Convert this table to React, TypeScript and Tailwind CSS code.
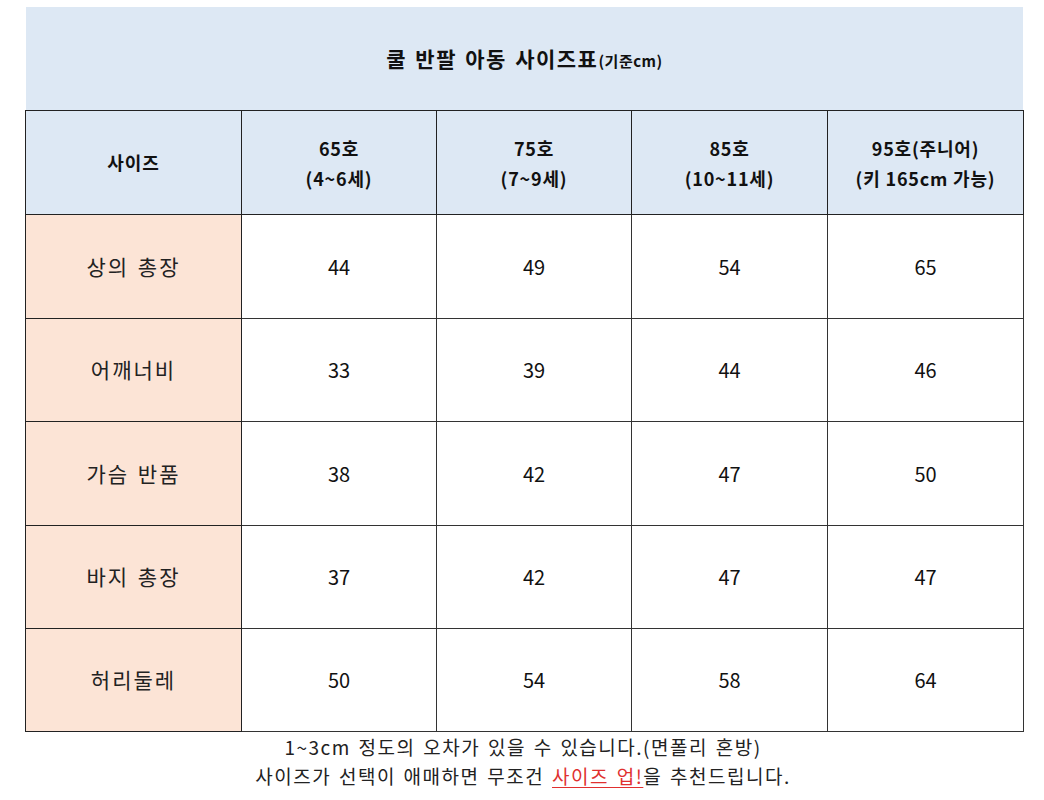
import React from "react";

const headers = [
  ["65호", "(4~6세)"],
  ["75호", "(7~9세)"],
  ["85호", "(10~11세)"],
  ["95호(주니어)", "(키 165cm 가능)"],
];

const rows: { label: string; values: string[]; h: string }[] = [
  { label: "상의 총장", values: ["44", "49", "54", "65"], h: "h-[104px]" },
  { label: "어깨너비", values: ["33", "39", "44", "46"], h: "h-[103px]" },
  { label: "가슴 반품", values: ["38", "42", "47", "50"], h: "h-[104px]" },
  { label: "바지 총장", values: ["37", "42", "47", "47"], h: "h-[103px]" },
  { label: "허리둘레", values: ["50", "54", "58", "64"], h: "h-[103px]" },
];

export default function App() {
  return (
    <div
      className="w-[1044px] h-[800px] bg-white text-[#111] overflow-hidden"
      style={{ fontFamily: '"Noto Sans CJK KR", "Noto Sans", sans-serif' }}
    >
      <div className="pt-[7px] pl-[26px]">
        {/* title band */}
        <div className="w-[997px] h-[103px] bg-[#dde8f4] flex items-center justify-center">
          <span className="text-[21px] font-bold tracking-[1.5px] [word-spacing:2px]">
            쿨 반팔 아동 사이즈표
            <span className="text-[15px] tracking-[0.5px]">(기준cm)</span>
          </span>
        </div>
      </div>

      <div className="ml-[25px] w-[999px] grid grid-cols-[216px_195px_195px_196px_196px] border-l border-t border-[#222]">
        {/* header */}
        <div className="h-[104px] bg-[#dde8f4] border-r border-b border-[#222] flex items-center justify-center text-[18px] font-bold tracking-[1px]">
          사이즈
        </div>
        {headers.map(([a, b], i) => (
          <div
            key={i}
            className="h-[104px] bg-[#dde8f4] border-r border-b border-[#222] flex flex-col items-center justify-center text-[18px] font-bold leading-[30px] tracking-[0.8px]"
          >
            <span>{a}</span>
            <span>{b}</span>
          </div>
        ))}

        {rows.map((r) => (
          <React.Fragment key={r.label}>
            <div
              className={`${r.h} bg-[#fce4d6] border-r border-b border-[#222] flex items-center justify-center text-[21px] text-[#222] tracking-[2px] [word-spacing:2px]`}
            >
              {r.label}
            </div>
            {r.values.map((v, j) => (
              <div
                key={j}
                className={`${r.h} bg-white border-r border-b border-[#333] flex items-center justify-center text-[20px] text-[#111]`}
              >
                {v}
              </div>
            ))}
          </React.Fragment>
        ))}
      </div>

      {/* notes */}
      <div className="flex flex-col items-center text-[19px] leading-[29px] text-[#222] tracking-[1.5px] [word-spacing:2px] pl-[2px]">
        <p>1~3cm 정도의 오차가 있을 수 있습니다.(면폴리 혼방)</p>
        <p>
          사이즈가 선택이 애매하면 무조건{" "}
          <span className="text-[#e0302f] underline underline-offset-[3px]">사이즈 업!</span>을 추천드립니다.
        </p>
      </div>
    </div>
  );
}
